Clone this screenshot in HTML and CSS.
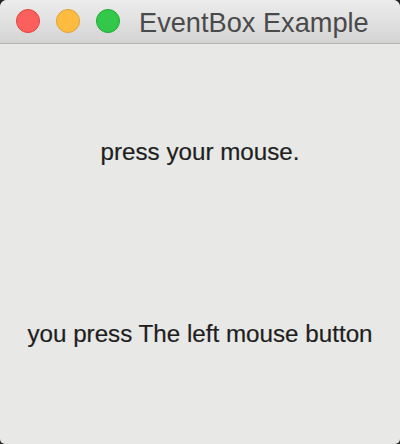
FILE: index.html
```html
<!DOCTYPE html>
<html>
<head>
<meta charset="utf-8">
<link rel="stylesheet" href="styles.css">
</head>
<body>
<div class="window">
  <div class="titlebar">
    <div class="lights">
      <span class="light red"></span>
      <span class="light yellow"></span>
      <span class="light green"></span>
    </div>
    <div class="title">EventBox Example</div>
  </div>
  <div class="content">
    <div class="label first">press your mouse.</div>
    <div class="label second">you press The left mouse button</div>
  </div>
</div>
</body>
</html>
```
FILE: styles.css
```css
html, body {
  margin: 0;
  padding: 0;
  background: #262626;
}
.window {
  width: 400px;
  height: 444px;
  border-radius: 7px 7px 5px 5px;
  overflow: hidden;
  background: #e8e8e6;
  display: flex;
  flex-direction: column;
  font-family: "Liberation Sans", Arial, sans-serif;
}
.titlebar {
  height: 43px;
  border-bottom: 1px solid #b4b4b4;
  background: linear-gradient(#ececec, #d4d4d4);
  display: flex;
  align-items: center;
  flex-shrink: 0;
}
.lights {
  display: flex;
  gap: 16px;
  padding-left: 16px;
  margin-top: -1px;
}
.light {
  width: 22px;
  height: 22px;
  border-radius: 50%;
  border: 1px solid;
  display: block;
}
.red { background: #fc605c; border-color: #e0443e; }
.yellow { background: #fdbc40; border-color: #dea236; }
.green { background: #34c84a; border-color: #1eab33; }
.title {
  margin-left: 19px;
  font-size: 27.2px;
  color: #4a4a4a;
  line-height: 43px;
  padding-top: 1px;
}
.content {
  flex: 1;
  display: flex;
  flex-direction: column;
  align-items: center;
}
.label {
  font-size: 24.2px;
  line-height: 28px;
  color: #1e1e1e;
  -webkit-text-stroke: 0.2px #1e1e1e;
}
.first { margin-top: 94px; }
.second { margin-top: 154px; }
```
